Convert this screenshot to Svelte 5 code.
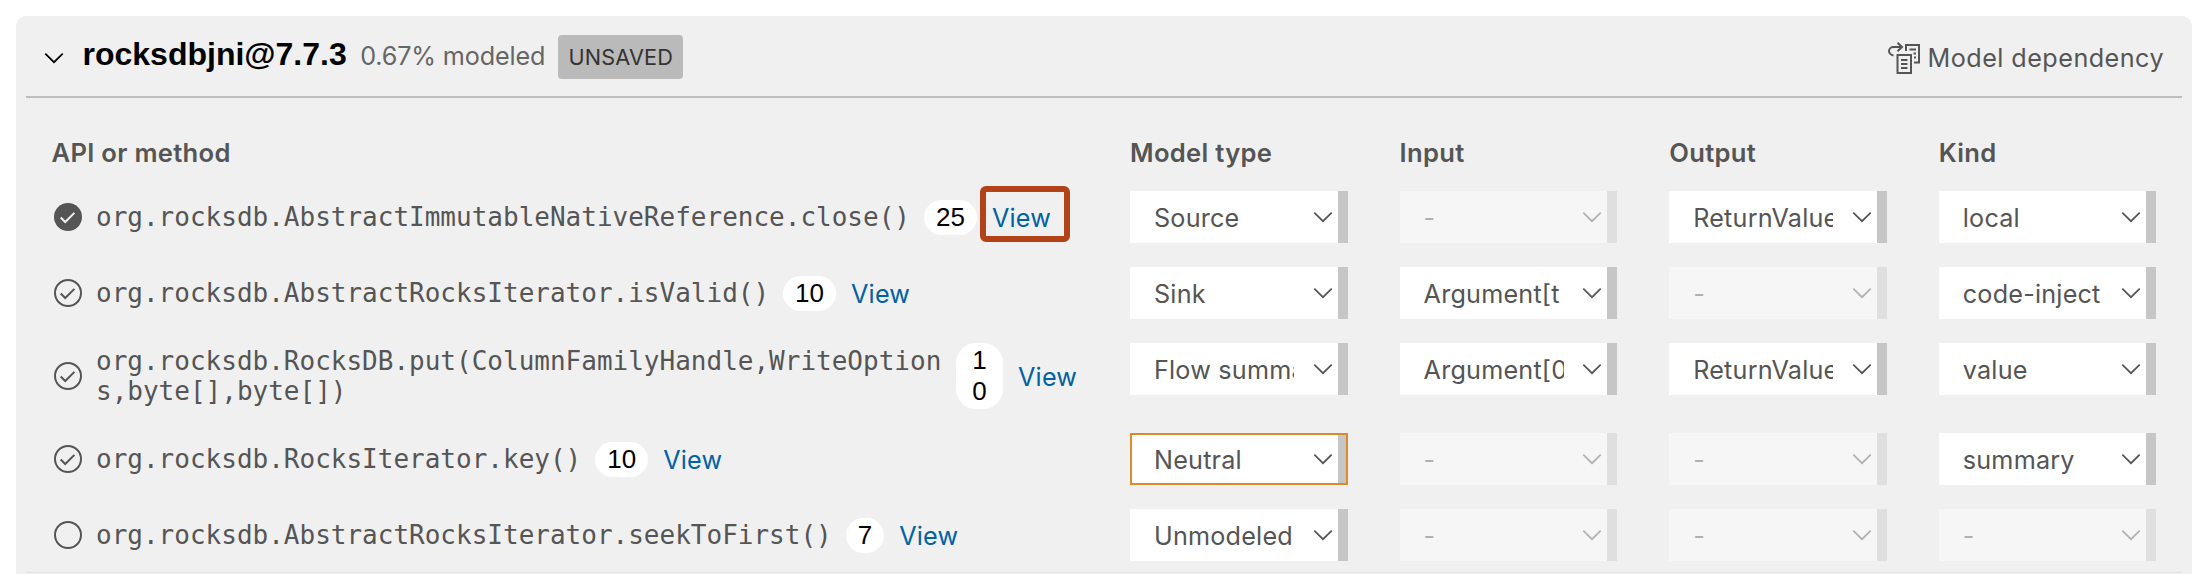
<script>
  const rows = [
    { status: 'done', name: 'org.rocksdb.AbstractImmutableNativeReference.close()', count: '25', highlight: true, cells: ['Source', '', 'ReturnValue', 'local'] },
    { status: 'pass', name: 'org.rocksdb.AbstractRocksIterator.isValid()', count: '10', cells: ['Sink', 'Argument[t', '', 'code-inject'] },
    { status: 'pass', name: 'org.rocksdb.RocksDB.put(ColumnFamilyHandle,WriteOptions,byte[],byte[])', count: '10', narrow: true, cells: ['Flow summa', 'Argument[0', 'ReturnValue', 'value'] },
    { status: 'pass', name: 'org.rocksdb.RocksIterator.key()', count: '10', focus: true, cells: ['Neutral', '', '', 'summary'] },
    { status: 'none', name: 'org.rocksdb.AbstractRocksIterator.seekToFirst()', count: '7', cells: ['Unmodeled', '', '', ''] }
  ];
</script>

{#snippet chevron()}
  <svg class="chevron" viewBox="0 0 20 12" width="20" height="12"><path d="M1.3 1.6L10 10.2L18.7 1.6" fill="none" stroke="currentColor" stroke-width="1.7" /></svg>
{/snippet}

<main class="page">
  <section class="card">
    <header class="head">
      <span class="toggle">{@render chevron()}</span>
      <h3 class="title">rocksdbjni@7.7.3</h3>
      <span class="modeled">0.67% modeled</span>
      <span class="unsaved">UNSAVED</span>
      <button class="action">
        <svg viewBox="0 0 32 32" width="32" height="32" fill="none" stroke="currentColor" stroke-width="2">
          <path d="M5.5 13.6C2.6 12.7 1 10.9 1 9C1 6.700 3 5 5.500 5H14M9.500 .8L14 5L9.500 9.200" />
          <path d="M18 9V3H31V20.500H26" />
          <path d="M9.500 13H23V31H9.500Z" />
          <path d="M21.500 7.500H28M25.500 11.500H28M26 15.500H28M13 18H19.500M13 22H19.500M13 26H19.500" />
        </svg>
        <span>Model dependency</span>
      </button>
    </header>

    <div class="table">
      <div class="row labels">
        <span>API or method</span>
        <span>Model type</span>
        <span>Input</span>
        <span>Output</span>
        <span>Kind</span>
      </div>
      {#each rows as row}
        <div class="row">
          <div class="method">
            <svg class="status" viewBox="0 0 16 16" width="32" height="32">
              {#if row.status === 'done'}
                <circle cx="8" cy="8" r="7" fill="#555" />
                <path d="M4.350 8.250L6.620 10.520L11.200 5.940" fill="none" stroke="#f0f0f0" />
              {:else}
                <circle cx="8" cy="8" r="6.500" fill="none" stroke="#555" />
                {#if row.status === 'pass'}
                  <path d="M4.350 8.250L6.620 10.520L11.200 5.940" fill="none" stroke="#555" />
                {/if}
              {/if}
            </svg>
            <span class="name">{row.name}</span>
            <span class="count" class:narrow={row.narrow}>{row.count}</span>
            <span class="view" class:highlight={row.highlight}>View</span>
          </div>
          {#each row.cells as cell, i}
            <div class="select" class:disabled={!cell} class:focus={row.focus && i === 0}>
              <span class="value">{cell || '-'}</span>
              {@render chevron()}
            </div>
          {/each}
        </div>
      {/each}
    </div>
    <div class="end"></div>
  </section>
</main>

<style>
  .page {
    box-sizing: border-box;
    height: 574px;
    padding: 16px 16px 0;
    overflow: hidden;
    background: #fff;
    color: #555;
    font: 25.2px/32px Inter, sans-serif;
  }
  .card {
    height: 558px;
    box-sizing: border-box;
    padding: 0 10px;
    border-radius: 10px 10px 0 0;
    background: #f0f0f0;
  }
  .head {
    box-sizing: border-box;
    display: flex;
    align-items: center;
    height: 82px;
    padding: 0 18px 0 18px;
    border-bottom: 2px solid #bebebe;
  }
  .chevron { display: block; flex: none; }
  .toggle { margin: 3px 19px 0 -.5px; color: #000; }
  .title {
    margin: -5px 0 0;
    color: #000;
    font: bold 32px/36px "Liberation Sans", sans-serif;
  }
  .modeled { margin-left: 13.5px; color: #666; letter-spacing: -.15px; }
  .unsaved {
    box-sizing: border-box;
    width: 125px;
    height: 44px;
    margin: 2px 0 0 13px;
    border-radius: 4px;
    background: #bababa;
    color: #333;
    font-size: 21.7px;
    line-height: 44px;
    letter-spacing: .15px;
    text-align: center;
  }
  .action {
    display: flex;
    align-items: center;
    gap: 8px;
    margin: 3px 0 0 auto;
    padding: 0;
    border: 0;
    background: none;
    color: #555;
    font: inherit;
    letter-spacing: .45px;
  }
  .table {
    display: flex;
    flex-direction: column;
    gap: 24px;
    padding: 39px 24px 11px 25.5px;
  }
  .row {
    display: grid;
    grid-template-columns: 1026.5px repeat(4, 217.6px);
    column-gap: 52px;
    align-items: start;
  }
  .labels {
    height: 30px;
    line-height: 32px;
    font-size: 25.6px;
    font-weight: 600;
    letter-spacing: .3px;
  }
  .method {
    display: flex;
    align-items: center;
    min-height: 52px;
  }
  .status { display: block; flex: none; margin-right: 12.5px; }
  .name {
    max-width: 846px;
    overflow-wrap: anywhere;
    font: 26px/30px "DejaVu Sans Mono", monospace;
  }
  .count {
    box-sizing: border-box;
    margin-left: 14px;
    padding: 2px 12px;
    border-radius: 20px;
    background: #fff;
    color: #000;
    font: 26px/31px "Liberation Sans", sans-serif;
    text-align: center;
  }
  .narrow {
    width: 47px;
    padding: 2px 16px;
    overflow-wrap: anywhere;
  }
  .view {
    position: relative;
    margin: 2px 0 0 15px;
    color: #0062a3;
    letter-spacing: .2px;
  }
  .highlight::after {
    content: "";
    position: absolute;
    box-sizing: border-box;
    left: -12px;
    top: -16px;
    width: 90px;
    height: 56px;
    border: 6px solid #b24217;
    border-radius: 6px;
  }
  .select {
    box-sizing: border-box;
    display: flex;
    align-items: center;
    height: 52px;
    padding: 0 6px 0 24px;
    border-right: 10px solid #c6c6c6;
    background: #fff;
  }
  .value {
    width: 140px;
    margin: 2px 18.5px 0 0;
    flex: none;
    overflow: hidden;
    white-space: nowrap;
    letter-spacing: .2px;
  }
  .focus { outline: 2px solid #dd8a2b; outline-offset: -2px; }
  .disabled { opacity: .4; }
  .end { height: 1px; background: #e3e3e3; }
</style>
